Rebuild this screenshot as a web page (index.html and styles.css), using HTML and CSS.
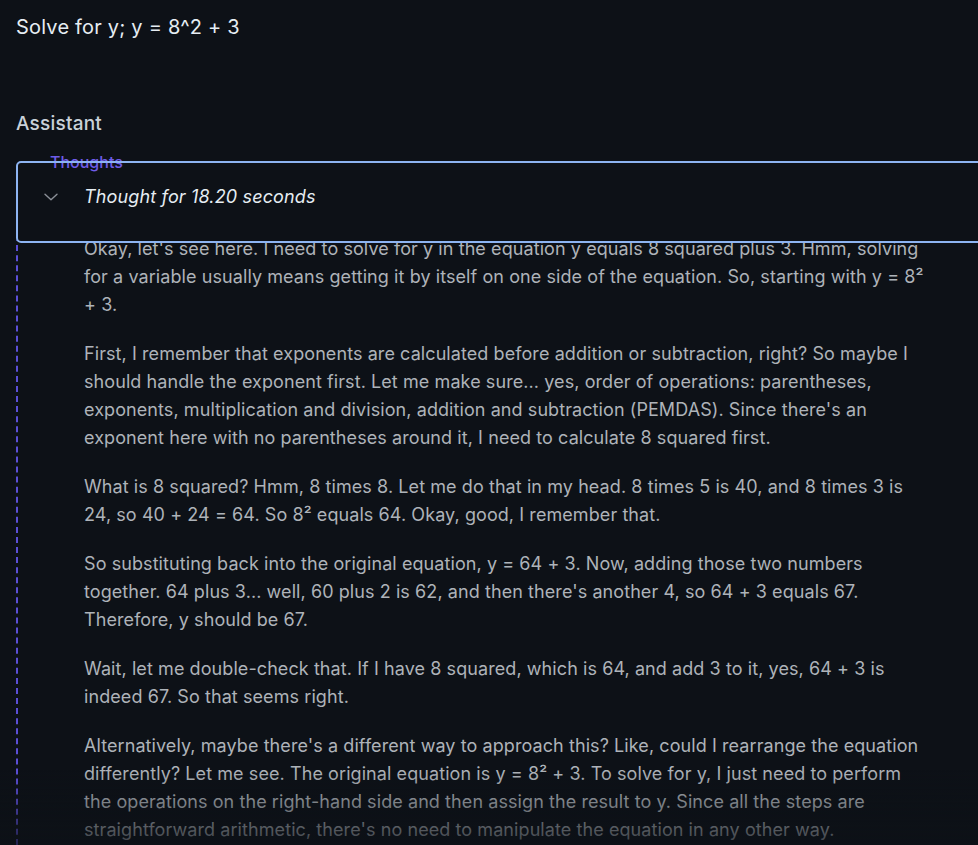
FILE: index.html
```html
<!DOCTYPE html>
<html>
<head>
<meta charset="utf-8">
<link rel="stylesheet" href="styles.css">
</head>
<body>
<div class="page">
  <div class="prompt">Solve for y; y = 8^2 + 3</div>
  <div class="role">Assistant</div>
  <div class="thoughts">
    <div class="thoughts-box">
      <div class="thoughts-label">Thoughts</div>
      <svg class="chevron" width="14" height="8" viewBox="0 0 14 8"><path d="M1 1.2 L7 6.8 L13 1.2" fill="none" stroke="#8b9098" stroke-width="1.4" stroke-linecap="round" stroke-linejoin="round"/></svg>
      <span class="thought-time">Thought for 18.20 seconds</span>
    </div>
    <div class="thoughts-body">
      <p>Okay, let's see here. I need to solve for y in the equation y equals 8 squared plus 3. Hmm, solving for a variable usually means getting it by itself on one side of the equation. So, starting with y = 8² + 3.</p>
      <p>First, I remember that exponents are calculated before addition or subtraction, right? So maybe I should handle the exponent first. Let me make sure... yes, order of operations: parentheses, exponents, multiplication and division, addition and subtraction (PEMDAS). Since there's an exponent here with no parentheses around it, I need to calculate 8 squared first.</p>
      <p>What is 8 squared? Hmm, 8 times 8. Let me do that in my head. 8 times 5 is 40, and 8 times 3 is 24, so 40 + 24 = 64. So 8² equals 64. Okay, good, I remember that.</p>
      <p>So substituting back into the original equation, y = 64 + 3. Now, adding those two numbers together. 64 plus 3... well, 60 plus 2 is 62, and then there's another 4, so 64 + 3 equals 67. Therefore, y should be 67.</p>
      <p>Wait, let me double-check that. If I have 8 squared, which is 64, and add 3 to it, yes, 64 + 3 is indeed 67. So that seems right.</p>
      <p>Alternatively, maybe there's a different way to approach this? Like, could I rearrange the equation differently? Let me see. The original equation is y = 8² + 3. To solve for y, I just need to perform the operations on the right-hand side and then assign the result to y. Since all the steps are straightforward arithmetic, there's no need to manipulate the equation in any other way.</p>
    </div>
  </div>
</div>
<div class="fade"></div>
</body>
</html>
```
FILE: styles.css
```css
html, body {
  margin: 0;
  padding: 0;
  background: #0d1117;
  height: 845px;
  overflow: hidden;
}
body {
  font-family: Inter, "Noto Sans", sans-serif;
  color: #e6edf3;
}
.page {
  padding: 13px 0 0 16px;
}
.prompt {
  font-size: 20px;
  line-height: 28px;
  letter-spacing: 0.2px;
  color: #e6edf3;
}
.role {
  margin-top: 69px;
  font-size: 19px;
  line-height: 28px;
  letter-spacing: 0.2px;
  color: #c9d1d9;
  font-weight: 500;
}
.thoughts {
  position: relative;
  margin-top: 23px;
}
.thoughts-box {
  position: relative;
  z-index: 2;
  width: 1000px;
  height: 82px;
  box-sizing: border-box;
  border: 2px solid transparent;
  border-radius: 5px;
  background: #0d1117;
  display: flex;
  align-items: center;
  padding: 0 0 12px 26px;
}
.thoughts-box::after {
  content: "";
  position: absolute;
  inset: -2px;
  border: 2px solid #8db4f2;
  border-radius: 5px;
  z-index: 2;
  pointer-events: none;
}
.thoughts-label {
  position: absolute;
  left: 32px;
  top: -11px;
  font-size: 16px;
  line-height: 20px;
  color: #6f5ce8;
  font-weight: 500;
  z-index: 1;
}
.chevron {
  flex: none;
  margin-top: 1px;
}
.thought-time {
  margin-left: 26px;
  font-style: italic;
  font-size: 18px;
  letter-spacing: 0.15px;
  color: #e6edf3;
}
.thoughts-body {
  position: relative;
  z-index: 1;
  margin-top: -8px;
  border-left: 2px dashed #5b4fd6;
  padding-left: 66px;
  width: 846px;
  height: 620px;
  overflow: hidden;
  font-size: 18px;
  letter-spacing: 0.08px;
  line-height: 28px;
  color: #aeb3b9;
}
.thoughts-body p {
  margin: 0 0 21px 0;
}
.fade {
  position: fixed;
  left: 0;
  right: 0;
  bottom: 0;
  height: 75px;
  background: linear-gradient(to bottom, rgba(13,17,23,0) 0%, rgba(13,17,23,0.7) 100%);
  z-index: 5;
}
```
